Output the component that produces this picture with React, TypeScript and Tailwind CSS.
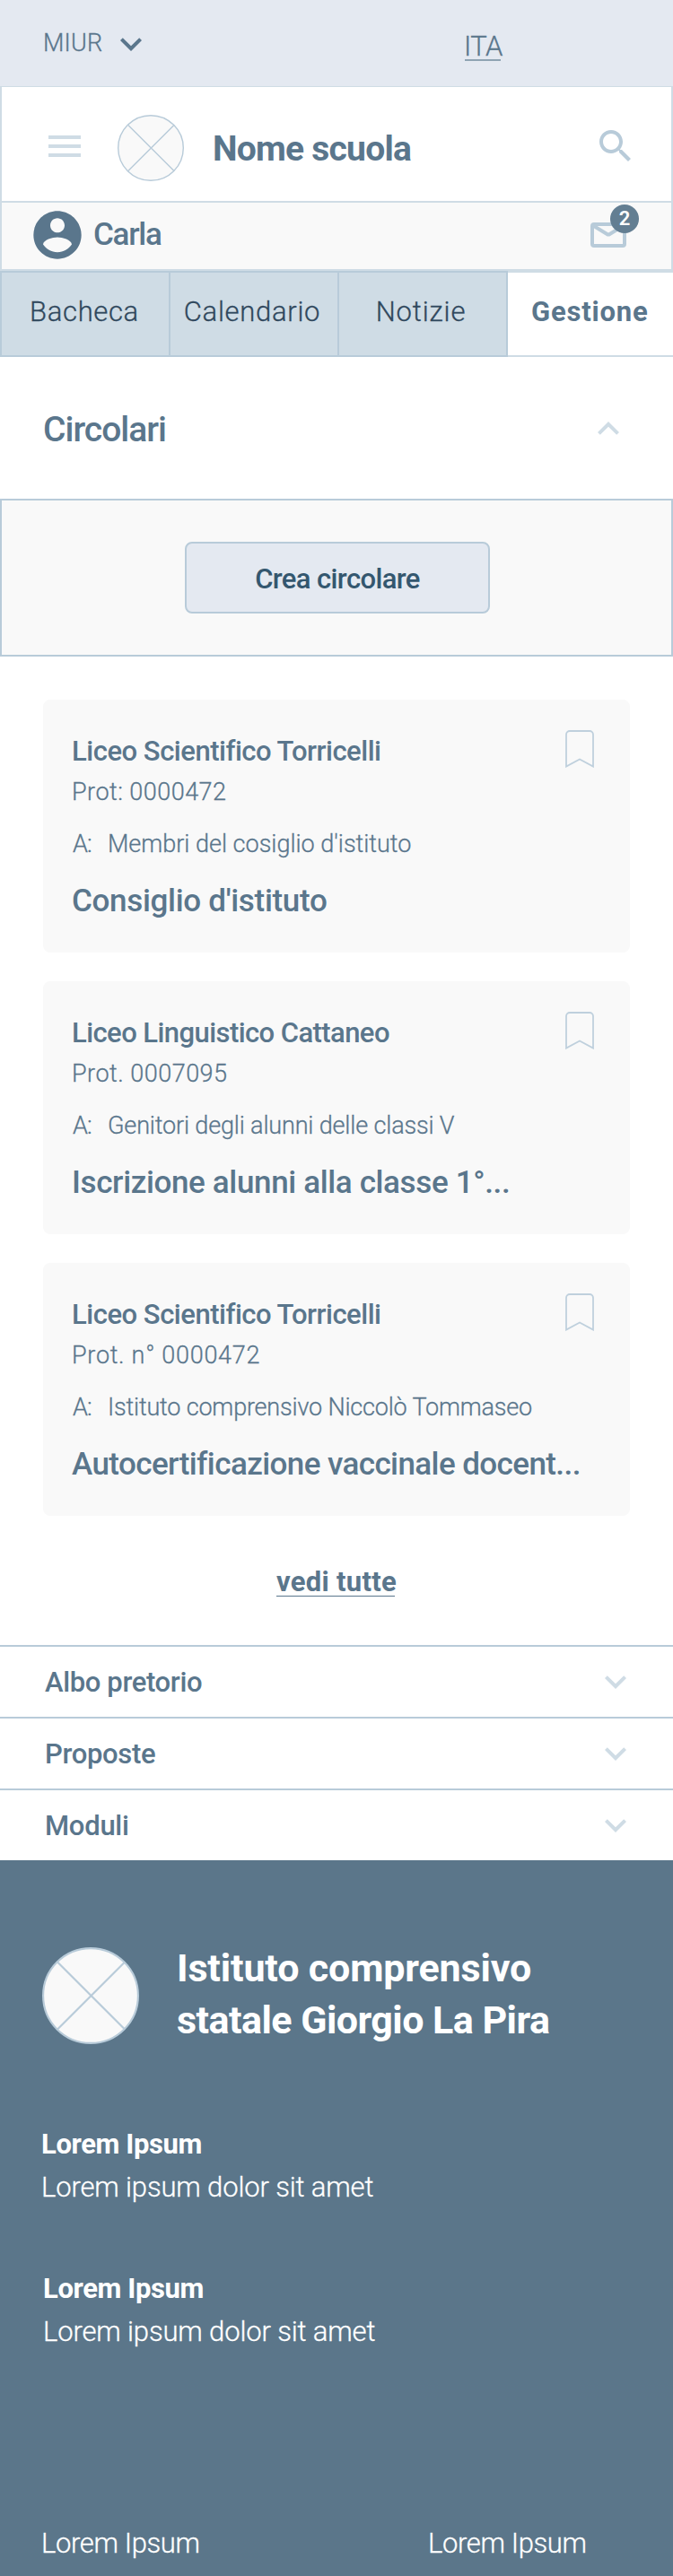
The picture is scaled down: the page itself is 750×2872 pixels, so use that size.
import type { ReactNode } from "react";

type IconProps = { className?: string };

function MaterialIcon({ className = "", children }: IconProps & { children: ReactNode }) {
  return (
    <svg viewBox="0 0 24 24" fill="currentColor" className={`block shrink-0 ${className}`} aria-hidden="true">
      {children}
    </svg>
  );
}

function ChevronDown({ className = "" }: IconProps) {
  return (
    <MaterialIcon className={`size-12 ${className}`}>
      <path d="M16.59 8.59 12 13.17 7.41 8.59 6 10l6 6 6-6z" />
    </MaterialIcon>
  );
}

function ChevronUp({ className = "" }: IconProps) {
  return (
    <MaterialIcon className={`size-12 ${className}`}>
      <path d="m12 7.5-6 6 1.41 1.41L12 10.33l4.59 4.58L18 13.5z" />
    </MaterialIcon>
  );
}

function CrossedCircle({ className = "", strokeWidth }: IconProps & { strokeWidth: number }) {
  const r = 50 - strokeWidth / 2;
  return (
    <svg
      viewBox="0 0 100 100"
      fill="#f9f9f9"
      stroke="#b8cbd9"
      strokeWidth={strokeWidth}
      className={`block shrink-0 ${className}`}
      aria-hidden="true"
    >
      <circle cx="50" cy="50" r={r} />
      <path d="M16 15.5 85 84.5M85 15.5 16 84.5" />
    </svg>
  );
}

function Bookmark() {
  return (
    <svg viewBox="0 0 32 42" fill="none" stroke="#bfd0dd" strokeWidth="1.8" className="block h-[42px] w-8 shrink-0" aria-hidden="true">
      <path d="M1 40.6V5a4 4 0 0 1 4-4h22a4 4 0 0 1 4 4v35.6L16 32.5z" />
    </svg>
  );
}

const thin = "font-light [-webkit-text-stroke:0.3px_currentColor]";

function TopBar() {
  return (
    <div className="flex h-24 items-start bg-[#e4e9f1]">
      <span className={`${thin} mt-7 ml-12 w-[74px] text-[27px] leading-10 tracking-[0.23px]`}>MIUR</span>
      <ChevronDown className="mt-[25px]" />
      <div className="mt-8 ml-[347px] w-[43px]">
        <span className={`${thin} block h-[34px] text-[31px] leading-10 tracking-[-0.57px]`}>ITA</span>
        <div className="ml-px h-0.5 w-10 bg-[#8fa4b3]" />
      </div>
    </div>
  );
}

function Header() {
  return (
    <header className="border-x-2 border-t border-[#cfdce5]">
      <div className="flex h-[127px] items-start bg-white">
        <MaterialIcon className="mt-[42px] ml-[46px] size-12 text-[#cfdce5]">
          <path d="M3 18h18v-2H3v2zm0-5h18v-2H3v2zm0-7v2h18V6H3z" />
        </MaterialIcon>
        <CrossedCircle className="mt-[31px] ml-[35px] size-[74px]" strokeWidth={1.9} />
        <h1 className="mt-[49px] ml-8 text-[39px] leading-10 font-bold tracking-[-0.76px]">Nome scuola</h1>
        <MaterialIcon className="mt-[42px] mr-[38px] ml-auto size-12 text-[#b8cbd9]">
          <path d="M15.5 14h-.79l-.28-.27C15.41 12.59 16 11.11 16 9.5 16 5.91 13.09 3 9.5 3S3 5.91 3 9.5 5.91 16 9.5 16c1.61 0 3.09-.59 4.23-1.57l.27.28v.79l5 4.99L20.49 19l-4.99-5zm-6 0C7.01 14 5 11.99 5 9.5S7.01 5 9.5 5 14 7.01 14 9.5 11.99 14 9.5 14z" />
        </MaterialIcon>
      </div>
      <div className="flex h-[78px] items-start border-y-2 border-[#cfdce5] bg-[#f9f9f9]">
        <MaterialIcon className="mt-[4px] ml-[30px] size-[64px]">
          <path d="M12 2C6.48 2 2 6.48 2 12s4.48 10 10 10 10-4.48 10-10S17.52 2 12 2zm0 3c1.66 0 3 1.34 3 3s-1.34 3-3 3-3-1.34-3-3 1.34-3 3-3zm0 14.2c-2.5 0-4.71-1.28-6-3.22.03-1.99 4-3.08 6-3.08 1.99 0 5.97 1.09 6 3.08-1.29 1.94-3.5 3.22-6 3.22z" />
        </MaterialIcon>
        <span className="mt-4 ml-2 text-[35px] leading-10 font-medium tracking-[-1.25px]">Carla</span>
        <div className="relative mt-[22px] mr-[50px] ml-auto">
          <svg viewBox="0 0 40 28" fill="none" stroke="#b8cbd9" strokeWidth="4" strokeLinejoin="round" className="block h-7 w-10" aria-hidden="true">
            <rect x="2" y="2" width="36" height="24" rx="2" />
            <path d="M3 3.5 18.5 13q1.5 1 3 0L37 3.5" />
          </svg>
          <span className="absolute -top-5 left-[22px] flex size-8 items-center justify-center rounded-full bg-[#637e92] text-[22px] leading-8 font-semibold text-white">
            2
          </span>
        </div>
      </div>
    </header>
  );
}

function Tabs() {
  const tab = "flex h-24 items-start justify-center border-y-2 border-[#b8cbd9] bg-[#cfdce5] pt-6 text-[31px] leading-10 text-[#30485d]";
  return (
    <nav className="flex">
      <div className={`${tab} w-[190px] border-x-2 pr-0.5 tracking-[0.64px]`}>
        <span className={thin}>Bacheca</span>
      </div>
      <div className={`${tab} w-[188px] border-r-2 pr-1 tracking-[0.7px]`}>
        <span className={thin}>Calendario</span>
      </div>
      <div className={`${tab} w-[188px] border-r-2 pr-1 tracking-[0.9px]`}>
        <span className={thin}>Notizie</span>
      </div>
      <div className="h-24 flex-1 border-y-2 border-[#cfdce5] bg-white pt-6 pl-[26px] text-[31px] leading-10 font-bold tracking-[0.81px]">
        Gestione
      </div>
    </nav>
  );
}

type Circular = {
  school: string;
  schoolClass: string;
  protocol: string;
  protocolClass: string;
  recipient: string;
  recipientClass: string;
  title: string;
  titleClass: string;
};

const circulars: Circular[] = [
  {
    school: "Liceo Scientifico Torricelli",
    schoolClass: "tracking-[-0.48px]",
    protocol: "Prot: 0000472",
    protocolClass: "tracking-[0.47px]",
    recipient: "Membri del cosiglio d'istituto",
    recipientClass: "tracking-normal",
    title: "Consiglio d'istituto",
    titleClass: "tracking-[-0.31px]",
  },
  {
    school: "Liceo Linguistico Cattaneo",
    schoolClass: "tracking-[-0.57px]",
    protocol: "Prot. 0007095",
    protocolClass: "tracking-[0.49px]",
    recipient: "Genitori degli alunni delle classi V",
    recipientClass: "tracking-[-0.15px]",
    title: "Iscrizione alunni alla classe 1°...",
    titleClass: "tracking-[-0.36px]",
  },
  {
    school: "Liceo Scientifico Torricelli",
    schoolClass: "tracking-[-0.48px]",
    protocol: "Prot. n° 0000472",
    protocolClass: "tracking-[0.71px]",
    recipient: "Istituto comprensivo Niccolò Tommaseo",
    recipientClass: "tracking-[-0.18px]",
    title: "Autocertificazione vaccinale docent...",
    titleClass: "tracking-[-0.59px]",
  },
];

function CircularCard({ item }: { item: Circular }) {
  return (
    <article className="flex h-[282px] items-start justify-between rounded-lg bg-[#f9f9f9] pr-10 pl-8">
      <div className="pt-[38px] leading-10 whitespace-nowrap">
        <h3 className={`text-[31px] font-medium ${item.schoolClass}`}>{item.school}</h3>
        <p className={`${thin} mt-[5px] text-[27px] ${item.protocolClass}`}>{item.protocol}</p>
        <p className={`${thin} mt-[18px] flex text-[27px]`}>
          <span className="w-10 pl-px tracking-[-0.88px]">A:</span>
          <span className={item.recipientClass}>{item.recipient}</span>
        </p>
        <h2 className={`mt-6 text-[35px] font-medium ${item.titleClass}`}>{item.title}</h2>
      </div>
      <div className="mt-[34px] -ml-10">
        <Bookmark />
      </div>
    </article>
  );
}

const sections = [
  { label: "Albo pretorio", className: "tracking-[-0.36px]" },
  { label: "Proposte", className: "tracking-[-0.32px]" },
  { label: "Moduli", className: "tracking-[-0.26px]" },
];

function Footer() {
  return (
    <footer className="h-[798px] bg-[#5b768a] text-white">
      <div className="flex items-start pt-[91px] pl-[47px]">
        <CrossedCircle className="mt-1.5 size-[108px]" strokeWidth={2} />
        <div className="ml-[42px] text-[43px] leading-[58px] font-bold">
          <p className="tracking-[-0.15px]">Istituto comprensivo</p>
          <p className="tracking-[-0.54px]">statale Giorgio La Pira</p>
        </div>
      </div>
      <div className="mt-[90px] ml-[46px] text-[31px] leading-10">
        <p className="font-bold tracking-[-0.39px]">Lorem Ipsum</p>
        <p className={`${thin} mt-2 tracking-[-0.15px]`}>Lorem ipsum dolor sit amet</p>
      </div>
      <div className="mt-[73px] ml-12 text-[31px] leading-10">
        <p className="font-bold tracking-[-0.39px]">Lorem Ipsum</p>
        <p className={`${thin} mt-2 tracking-[-0.15px]`}>Lorem ipsum dolor sit amet</p>
      </div>
      <div className={`${thin} mt-[196px] grid grid-cols-[431px_auto] pl-[46px] text-[31px] leading-10 tracking-[-0.37px]`}>
        <span>Lorem Ipsum</span>
        <span>Lorem Ipsum</span>
      </div>
    </footer>
  );
}

export default function App() {
  return (
    <div className="w-[750px] overflow-hidden bg-white font-['Roboto',sans-serif] text-[#5a768c]">
      <TopBar />
      <Header />
      <Tabs />
      <section>
        <div className="flex h-[158px] items-start justify-between pr-12 pl-12">
          <h2 className="pt-[61px] text-[39px] leading-10 font-medium tracking-[-1.01px]">Circolari</h2>
          <ChevronUp className="mt-[57px] text-[#cfdce5]" />
        </div>
        <div className="flex h-44 justify-center border-2 border-[#b8cbd9] bg-[#f9f9f9] pt-[46px] pl-0.5">
          <button className="flex h-20 w-[340px] items-start justify-center rounded-lg border-2 border-[#b8cbd9] bg-[#e4e9f1] pt-5 text-[31px] leading-10 font-medium tracking-[-0.62px] text-[#34576f]">
            Crea circolare
          </button>
        </div>
        <div className="flex flex-col gap-8 px-12 pt-12">
          {circulars.map((item) => (
            <CircularCard key={item.title} item={item} />
          ))}
        </div>
        <div className="flex h-36 flex-col items-center pt-[54px]">
          <a className="block h-[35px] text-[31px] leading-10 font-bold tracking-[0.29px]">vedi tutte</a>
          <div className="h-px w-[132px] -translate-x-px bg-[#5a768c]" />
        </div>
      </section>
      {sections.map((s) => (
        <div key={s.label} className="flex h-20 items-start justify-between border-t-2 border-[#b8cbd9] pr-10 pl-[50px]">
          <span className={`pt-5 text-[31px] leading-10 font-medium ${s.className}`}>{s.label}</span>
          <ChevronDown className="mt-[15px] text-[#cfdce5]" />
        </div>
      ))}
      <Footer />
    </div>
  );
}
